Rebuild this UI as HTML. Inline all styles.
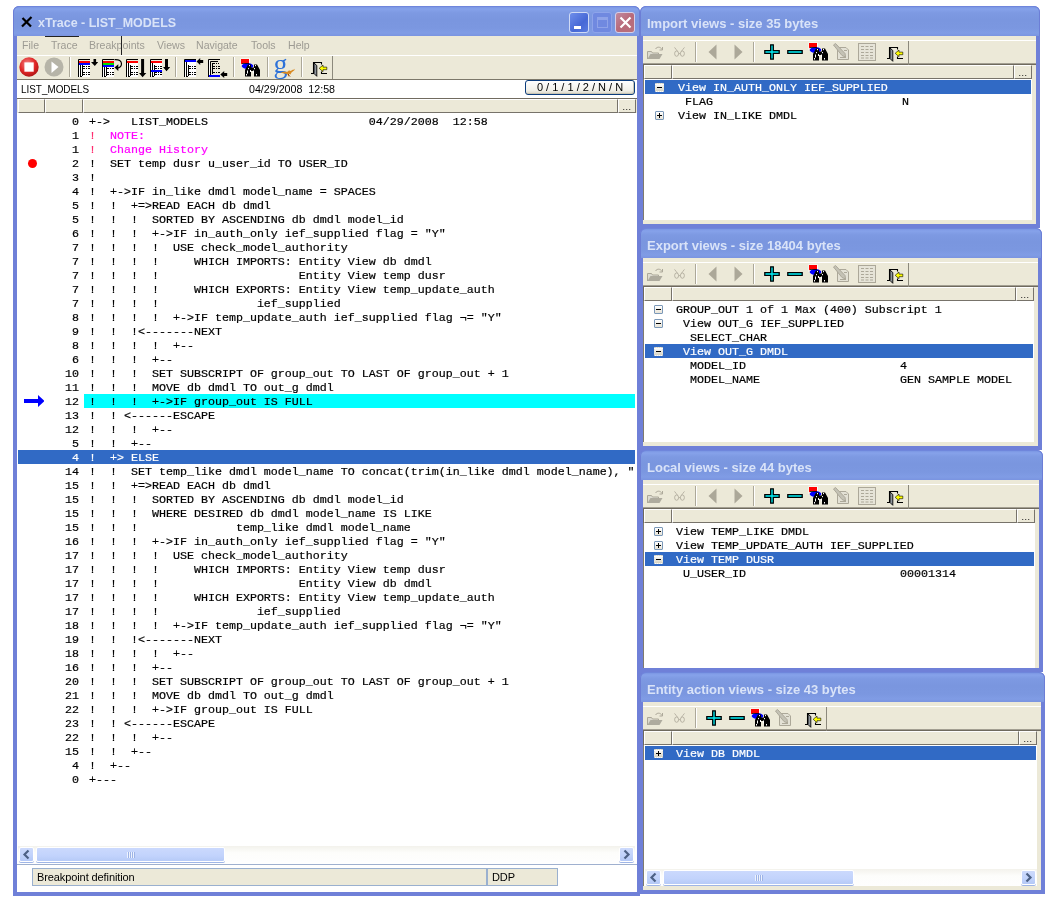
<!DOCTYPE html>
<html lang="en"><head><meta charset="utf-8"><title>xTrace - LIST_MODELS</title>
<style>
html,body{margin:0;padding:0;background:#fff;}
body{width:1052px;height:904px;position:relative;overflow:hidden;font-family:"Liberation Sans",sans-serif;font-size:11px;color:#000;}
*{box-sizing:border-box;}
.win{will-change:transform;position:absolute;background:#6f80d8;border-radius:6px 6px 0 0;overflow:hidden;}
.win.side{border-radius:6px 6px 0 0;}
.tbar{position:absolute;left:0;top:0;right:0;height:30px;background:linear-gradient(#7590e0 0,#86a2ea 3px,#7d99e2 7px,#7a96df 14px,#7b97e0 22px,#809ce5 27px,#7a94e0 30px);border-radius:6px 6px 0 0;box-shadow:inset 1px 0 0 #6c7ed6,inset -1px 0 0 #6c7ed6,inset 0 1px 0 #6f86dc;}
.appico{position:absolute;left:8px;top:10px;}
.ttl{position:absolute;top:9px;font-family:"Liberation Sans",sans-serif;font-weight:bold;font-size:13.5px;line-height:15px;color:#d9e3f8;white-space:pre;transform:scaleX(.925);transform-origin:0 50%;}
.ttl.s{font-size:13px;transform:none;top:10px;}
.cb{position:absolute;top:6px;width:20px;height:21px;border:1px solid #cfdaf5;border-radius:3px;}
.cb.min{background:linear-gradient(135deg,#6f8eea,#4668d6 60%,#5a7ce0);}
.cb.min i{position:absolute;left:4px;top:13px;width:7px;height:3px;background:#fff;}
.cb.max{background:#7089e0;border-color:#8ea4ea;}
.cb.max i{position:absolute;left:4px;top:4px;width:11px;height:11px;border:1px solid #8fa3e8;border-top-width:3px;}
.cb.cls{background:linear-gradient(135deg,#c08aa0,#b86a7a 50%,#b9707c);border-color:#d5cfe8;}
.cb.cls svg{position:absolute;left:-1px;top:-1px;}
.client{position:absolute;background:#ece9d8;overflow:hidden;}
#main .client{background:#fff;}
.menu{position:absolute;left:0;top:0;width:100%;height:19px;background:#ece9d8;}
.menu span{position:absolute;top:3px;font-size:11px;line-height:13px;color:#9d9b93;transform:scaleX(.96);transform-origin:0 50%;}
.menu .ml1{position:absolute;left:28px;top:0;width:34px;height:1px;background:#222;}
.menu .ml2{position:absolute;left:104px;top:0;width:1px;height:19px;background:#222;}
.tool{position:absolute;left:0;background:#ece9d8;border-top:1px solid #fff;border-bottom:1px solid #7c786a;}
.tbedge{position:absolute;top:0;bottom:0;border-right:1px solid #8c897c;}
.ic{position:absolute;overflow:visible;}
.sep{position:absolute;top:1px;width:2px;height:20px;border-left:1px solid #aca899;border-right:1px solid #fff;}
.info{position:absolute;left:0;top:44px;width:100%;height:19px;background:#fff;border-bottom:1px solid #716b60;}
.info span{position:absolute;top:3px;font-size:11px;line-height:13px;transform-origin:0 50%;}
.info .btn{position:absolute;left:508px;top:0;width:110px;height:15px;border:1px solid #0b3c7c;border-radius:3px;background:linear-gradient(#fff,#f2f1ea 70%,#d9d5c6);font-size:11px;line-height:13px;text-align:center;letter-spacing:0;word-spacing:0;box-shadow:inset -1px -1px 0 #c9c5b4;}
.hdr{position:absolute;left:0;height:14px;background:#ece9d8;z-index:2;}
.hdr i{position:absolute;top:0;height:14px;background:#ece9d8;border-left:1px solid #fff;border-top:1px solid #fff;border-right:1px solid #77736a;border-bottom:1px solid #77736a;font-style:normal;font-size:9px;line-height:9px;text-align:center;}
.hdr i.dots{padding-top:3px;letter-spacing:.5px;}
.code{-webkit-text-stroke:.2px currentColor;position:absolute;left:0;top:78px;width:620px;height:732px;background:#fff;font-family:"Liberation Mono",monospace;font-size:11.667px;line-height:14px;}
.row{position:absolute;left:0;width:620px;height:14px;white-space:pre;}
.row .n{position:absolute;left:27px;width:35px;text-align:right;top:1px;}
.row .t{position:absolute;left:72px;top:1px;}
.row.sel{background:#316ac5;color:#fff;left:1px;width:617px;}
.row.sel .n{left:26px}.row.sel .t{left:71px}
.row.mag{color:#ff00ff;}
.row.mag .n{color:#000;}
.row.mag em{font-style:normal;color:#ff2d6f;}
.cy{position:absolute;left:67px;top:0;width:551px;height:14px;background:#00ffff;}
.bp{position:absolute;left:11px;top:44.5px;width:9px;height:9px;border-radius:50%;background:#f00;}
.arr{position:absolute;left:7px;top:281px;}
.hs{position:absolute;height:17px;background:linear-gradient(#f3f2ec,#fdfdfb 40%,#fefefe);}
.sb{position:absolute;top:1px;width:15px;height:15px;border-radius:2px;background:linear-gradient(#cddafc,#c0d2fb 60%,#b4c8f6);border:1px solid #fff;box-shadow:0 1px 0 #9fb5e6;}
.sb svg{position:absolute;left:-1px;top:-1px;}
.sb.l{left:1px}.sb.r{right:1px}
.th{position:absolute;top:1px;height:15px;border-radius:2px;background:linear-gradient(#cbd9fd,#c2d3fc 60%,#b6caf7);border:1px solid #fff;box-shadow:0 1px 0 #9fb5e6;}
.th em{position:absolute;left:50%;top:4px;margin-left:-4px;width:8px;height:6px;background:repeating-linear-gradient(90deg,#eef3fe 0,#eef3fe 1px,#9db3e6 1px,#9db3e6 2px);}
.stline{position:absolute;left:0;top:828px;width:620px;height:1px;background:#9fb0cf;}
.st{position:absolute;top:832px;height:18px;background:#ece9d8;border:1px solid #9ab0cf;font-size:11px;line-height:16px;padding-left:4px;letter-spacing:-.1px;}
.side .client{background:#ece9d8;}
.tree{-webkit-text-stroke:.2px currentColor;position:absolute;left:0;background:#fff;border-left:1px solid #7f7b6e;font-family:"Liberation Mono",monospace;font-size:11.667px;line-height:14px;overflow:hidden;}
.side .hdr{left:0;border-left:1px solid #6f6a5e;}
.trow{position:absolute;left:1px;height:14px;white-space:pre;}
.trow.sel{background:#316ac5;color:#fff;}
.trow.sel .bx{border:1px dotted #e8e6dc;background:linear-gradient(#fff,#d6d2c2);}
.trow .t{position:absolute;top:1px;}
.trow .v{position:absolute;top:1px;}
.bx{position:absolute;left:10px;top:3px;width:9px;height:9px;border:1px solid #7b98b8;border-radius:1px;background:linear-gradient(#fff,#e8e4d8);}
.bx:before{content:"";position:absolute;left:1px;top:3px;width:5px;height:1px;background:#000;}
.bx.p:after{content:"";position:absolute;left:3px;top:1px;width:1px;height:5px;background:#000;}

.cp{position:absolute;left:640px;width:6px;height:6px;background:#6f80d8;}
.side .tool{border-bottom:0;box-shadow:inset 0 -1px 0 #6f6a5e,inset 0 -2px 0 #a39f92;}

</style></head>
<body>
<svg width="0" height="0" style="position:absolute"><defs>
<radialGradient id="g-red" cx=".42" cy=".35" r=".75"><stop offset="0" stop-color="#f48a8a"/><stop offset=".55" stop-color="#e02626"/><stop offset="1" stop-color="#9c1010"/></radialGradient>
<symbol id="i-stop" viewBox="0 0 22 22" overflow="visible"><circle cx="11" cy="11" r="9.700" fill="url(#g-red)"/><rect x="6.400" y="6.400" width="9.300" height="9.300" fill="#fff"/></symbol>
<symbol id="i-play" viewBox="0 0 22 22" overflow="visible"><circle cx="11" cy="11" r="9.500" fill="#b6b4a8"/><path d="M8.500 5.500L15.500 11L8.500 17Z" fill="#fff"/></symbol>
<symbol id="i-pg" viewBox="0 0 22 18" overflow="visible"><rect x="1" y="2" width="11" height="16" fill="#fff"/><path d="M0.500 18V0.500H12M2.500 17.500V2.500H12M2 17.500H4" stroke="#000" stroke-width="1" fill="none"/><path d="M4.500 6V17" stroke="#000" stroke-width="1"/><path d="M5 7.500H12M5 9.500H12M5 13.500H12M5 15.500H12" stroke="#000" stroke-width="1" stroke-dasharray="2 1 1 1 2" fill="none"/></symbol>
<symbol id="i-l1" viewBox="0 0 22 18" overflow="visible"><use href="#i-pg"/><rect x="1" y="2" width="11" height="2" fill="#f00"/><rect x="1" y="4" width="11" height="2" fill="#00f"/><path d="M15.500 0h2.600v3H20.200L16.800 7L13 3h2.500Z" fill="#000"/></symbol>
<symbol id="i-l2" viewBox="0 0 22 18" overflow="visible"><use href="#i-pg"/><rect x="1" y="2" width="11" height="2" fill="#f00"/><rect x="1" y="4" width="11" height="2" fill="#0d0"/><rect x="1" y="6" width="11" height="2" fill="#00f"/><path d="M12.500 0.600C17 0.200 19.600 2 19.500 5C19.400 8 17 9 15.500 8.800" stroke="#000" stroke-width="1.200" fill="none"/><path d="M16.300 5.300V12L12.500 8.500Z" fill="#000"/></symbol>
<symbol id="i-l3" viewBox="0 0 22 18" overflow="visible"><use href="#i-pg"/><rect x="1" y="2" width="11" height="2" fill="#f00"/><path d="M15.100 0h3v14h2.200L16.600 18.200L13 14h2.100Z" fill="#000"/></symbol>
<symbol id="i-l4" viewBox="0 0 22 18" overflow="visible"><use href="#i-pg"/><rect x="1" y="2" width="11" height="2" fill="#f00"/><rect x="1" y="11" width="11" height="2" fill="#00f"/><path d="M15 0h3v8h2.200L16.500 12.200L13 8h2Z" fill="#000"/></symbol>
<symbol id="i-l5" viewBox="0 0 22 18" overflow="visible"><use href="#i-pg"/><rect x="1" y="1" width="11" height="2" fill="#00f"/><path d="M19.200 1v3h-3v2L12.500 2.500L16.200 -1v2Z" fill="#000"/></symbol>
<symbol id="i-l6" viewBox="0 0 22 18" overflow="visible"><path d="M0.500 18V0.500H12M2.500 17.500V2.500H10" stroke="#000" stroke-width="1" fill="none"/><path d="M1.500 1V18" stroke="#fff"/><path d="M4.500 4V15" stroke="#000" stroke-width="1"/><path d="M5 4.500H11M5 7.500H12M5 9.500H12M5 13.500H12" stroke="#000" stroke-width="1" stroke-dasharray="2 1 1 1 2" fill="none"/><rect x="1" y="16" width="11" height="2" fill="#00f"/><path d="M19.200 14v3h-3v2L12.300 15.500L16.200 12v2Z" fill="#000"/></symbol>
<symbol id="i-bino" viewBox="0 0 20 18" overflow="visible"><path d="M-0.500 -0.500H9V5H2L-0.500 7Z" fill="#fff"/><path d="M0 0H8V4H2L0 5.500Z" fill="#f00"/><ellipse cx="6.500" cy="7" rx="5.800" ry="2.900" fill="#00f"/><path d="M1 4.500H8" stroke="#000" stroke-width=".8"/><path d="M4 17.500V11L7 5.500h3v3h3v-3h3L19 11v6.500h-6V12h-3v5.500Z" fill="#000"/><path d="M8.500 6v1.200M14.500 6v1.200M7.500 9v1.200M13.500 9v1.200M6.500 11.500v3M12.500 11.500v3M5.500 15v1.500M15.500 15v1.500M9.500 11v2" stroke="#fff" stroke-width="1"/></symbol>
<symbol id="i-goog" viewBox="0 0 22 21" overflow="visible"><text x="-0.500" y="14.500" font-family="Liberation Serif,serif" font-size="28" fill="#2d72d9">g</text><path d="M6.500 14.500c2.500-1.500 5-.5 7-.8c1.500-2 2.500-1 3.500-.8c1.200-1.800 3-.8 4-2.200c-.5 2.500-2.500 2.500-3.500 3.800c-1 1.800-1.500 3.500-3.500 4c.5-1.500-.5-2.500-2-2.800c-2 0-3.500-.5-5.500-1.200Z" fill="#d98a22"/><path d="M14 16l2 2.500" stroke="#7a3a10" stroke-width="1"/><path d="M14.500 15.500l2.300 1.500l-1 .8Z" fill="#fff"/></symbol>
<symbol id="i-exit" viewBox="0 0 17 16" overflow="visible"><path d="M2.500 12V1.500H10.500V3.500" stroke="#000" stroke-width="1.100" fill="none"/><path d="M3 2L5.800 4.500V15.300L3 12.500Z" fill="#8f959c" stroke="#000" stroke-width=".9"/><path d="M0 12.500H3" stroke="#000" stroke-width="1.100"/><path d="M10.500 10.500v2H16" stroke="#000" stroke-width="1.100" fill="none"/><path d="M8.200 7.300L12 4v2.100h3.800v2.600H12v2Z" fill="#ff0" stroke="#000" stroke-width=".6"/></symbol>
<symbol id="i-open" viewBox="0 0 17 14" overflow="visible"><path d="M0.500 13V5.500h4l1 1.500h6V8" fill="#dddbd0" stroke="#aca899" stroke-width="1"/><path d="M0.500 13L3.500 8h12L12.500 13Z" fill="#aeab9e"/><path d="M8.500 3c1.500-2.500 5-2.500 6.500.5" stroke="#aca899" stroke-width="1" fill="none"/><path d="M12.500 4h3V1" stroke="#aca899" stroke-width="1" fill="none"/></symbol>
<symbol id="i-glas" viewBox="0 0 13 14.500" overflow="visible"><ellipse cx="3" cy="8" rx="2.400" ry="3.200" fill="none" stroke="#aca899" stroke-width="1"/><ellipse cx="10" cy="8" rx="2.400" ry="3.200" fill="none" stroke="#aca899" stroke-width="1"/><path d="M0.500 0.500C2 2.500 3 3.500 4 5M12.500 .5C11 2.500 10 3.500 9 5M5.500 8h2" stroke="#aca899" stroke-width="1" fill="none"/></symbol>
<symbol id="i-left" viewBox="0 0 9 16" overflow="visible"><path d="M8.500 0.500V15.500L0.500 8Z" fill="#aca899"/></symbol>
<symbol id="i-right" viewBox="0 0 9 16" overflow="visible"><path d="M0.500 0.500V15.500L8.500 8Z" fill="#aca899"/></symbol>
<symbol id="i-plus" viewBox="0 0 16 16" overflow="visible"><path d="M6.700 0.800h2.600v5.900H15.200v2.600H9.300v5.900H6.700V9.300H0.800V6.700h5.900Z" fill="#00f0f8" stroke="#000" stroke-width="1.300"/></symbol>
<symbol id="i-minus" viewBox="0 0 16 6" overflow="visible"><path d="M0.800 1.700H15.200v2.600H0.800Z" fill="#00f0f8" stroke="#000" stroke-width="1.300"/></symbol>
<symbol id="i-edit" viewBox="0 0 17 17" overflow="visible"><path d="M4.500 4.500H13L15.500 7V16.500H4.500Z" fill="#e3e1d5" stroke="#aca899" stroke-width="1"/><path d="M0.500 2L2.500 0.500L12 10.500L12.500 14L9 12.500Z" fill="#c4c2b5" stroke="#aca899" stroke-width="1"/><path d="M7 14.500h6M11 7.500h3" stroke="#aca899"/></symbol>
<symbol id="i-tbl" viewBox="0 0 18 18" overflow="visible"><rect x="0.500" y="0.500" width="17" height="17" fill="#e6e4d8" stroke="#aca899" stroke-width="1"/><path d="M3 3.500h12M3 6.500h12M3 9.500h12M3 12.500h12M3 15h12" stroke="#aca899" stroke-width="1" stroke-dasharray="3 1.500"/></symbol>
</defs></svg>
<div class="win" id="main" style="left:13px;top:6px;width:627px;height:890px"><div class="tbar"><svg class="appico" width="12" height="12" viewBox="0 0 12 12"><path d="M1.500 2L10 10.500M10.500 1L1 10.500" stroke="#000" stroke-width="2.200" fill="none"/></svg><span class="ttl" style="left:25px">xTrace - LIST_MODELS</span><div class="cb min" style="left:556px"><i></i></div><div class="cb max" style="left:579px"><i></i></div><div class="cb cls" style="left:602px"><svg width="21" height="21" viewBox="0 0 21 21"><path d="M5.5 5.5 L15.5 15.5 M15.5 5.5 L5.5 15.5" stroke="#fff" stroke-width="2.2" fill="none"/></svg></div></div><div class="client" style="left:4px;top:30px;width:620px;height:856px"><div class="menu"><span style="left:5px">File</span><span style="left:34px">Trace</span><span style="left:72px">Breakpoints</span><span style="left:140px">Views</span><span style="left:179px">Navigate</span><span style="left:234px">Tools</span><span style="left:271px">Help</span><b class="ml1"></b><b class="ml2"></b></div><div class="tool" style="top:19px;width:620px;height:25px"><div class="tbedge" style="left:0;width:316px"></div><svg class="ic" style="left:1.4px;top:0.4px" width="22" height="22"><use href="#i-stop"/></svg><svg class="ic" style="left:25.5px;top:0.4px" width="22" height="22"><use href="#i-play"/></svg><b class="sep" style="left:52px"></b><svg class="ic" style="left:61px;top:3px" width="22" height="18"><use href="#i-l1"/></svg><svg class="ic" style="left:85px;top:3px" width="22" height="18"><use href="#i-l2"/></svg><svg class="ic" style="left:109px;top:3px" width="22" height="18"><use href="#i-l3"/></svg><svg class="ic" style="left:133px;top:3px" width="22" height="18"><use href="#i-l4"/></svg><b class="sep" style="left:158px"></b><svg class="ic" style="left:167px;top:3px" width="22" height="18"><use href="#i-l5"/></svg><svg class="ic" style="left:191px;top:3px" width="22" height="18"><use href="#i-l6"/></svg><b class="sep" style="left:216px"></b><svg class="ic" style="left:224px;top:3px" width="20" height="18"><use href="#i-bino"/></svg><b class="sep" style="left:250px"></b><svg class="ic" style="left:257px;top:1.5px" width="22" height="21"><use href="#i-goog"/></svg><b class="sep" style="left:284px"></b><svg class="ic" style="left:294px;top:5px" width="17" height="16"><use href="#i-exit"/></svg></div><div class="info"><span style="left:4px;transform:scaleX(.9)">LIST_MODELS</span><span style="left:232px;white-space:pre;transform:scaleX(.97)">04/29/2008  12:58</span><div class="btn">0 / 1 / 1 / 2 / N / N</div></div><div class="hdr" style="top:63px;width:620px"><i style="left:1px;width:27px"></i><i style="left:28px;width:38px"></i><i style="left:66px;width:535px"></i><i class="dots" style="left:601px;width:18px">...</i></div><div class="code"><div class="row" style="top:0px"><span class="n">0</span><span class="t">+-&gt;   LIST_MODELS                       04/29/2008  12:58</span></div><div class="row mag" style="top:14px"><span class="n">1</span><span class="t"><em>!</em>  NOTE:</span></div><div class="row mag" style="top:28px"><span class="n">1</span><span class="t"><em>!</em>  Change History</span></div><div class="row" style="top:42px"><span class="n">2</span><span class="t">!  SET temp dusr u_user_id TO USER_ID</span></div><div class="row" style="top:56px"><span class="n">3</span><span class="t">!</span></div><div class="row" style="top:70px"><span class="n">4</span><span class="t">!  +-&gt;IF in_like dmdl model_name = SPACES</span></div><div class="row" style="top:84px"><span class="n">5</span><span class="t">!  !  +=&gt;READ EACH db dmdl</span></div><div class="row" style="top:98px"><span class="n">5</span><span class="t">!  !  !  SORTED BY ASCENDING db dmdl model_id</span></div><div class="row" style="top:112px"><span class="n">6</span><span class="t">!  !  !  +-&gt;IF in_auth_only ief_supplied flag = "Y"</span></div><div class="row" style="top:126px"><span class="n">7</span><span class="t">!  !  !  !  USE check_model_authority</span></div><div class="row" style="top:140px"><span class="n">7</span><span class="t">!  !  !  !     WHICH IMPORTS: Entity View db dmdl</span></div><div class="row" style="top:154px"><span class="n">7</span><span class="t">!  !  !  !                    Entity View temp dusr</span></div><div class="row" style="top:168px"><span class="n">7</span><span class="t">!  !  !  !     WHICH EXPORTS: Entity View temp_update_auth</span></div><div class="row" style="top:182px"><span class="n">7</span><span class="t">!  !  !  !              ief_supplied</span></div><div class="row" style="top:196px"><span class="n">8</span><span class="t">!  !  !  !  +-&gt;IF temp_update_auth ief_supplied flag ¬= "Y"</span></div><div class="row" style="top:210px"><span class="n">9</span><span class="t">!  !  !&lt;-------NEXT</span></div><div class="row" style="top:224px"><span class="n">8</span><span class="t">!  !  !  !  +--</span></div><div class="row" style="top:238px"><span class="n">6</span><span class="t">!  !  !  +--</span></div><div class="row" style="top:252px"><span class="n">10</span><span class="t">!  !  !  SET SUBSCRIPT OF group_out TO LAST OF group_out + 1</span></div><div class="row" style="top:266px"><span class="n">11</span><span class="t">!  !  !  MOVE db dmdl TO out_g dmdl</span></div><div class="row" style="top:280px"><b class="cy"></b><span class="n">12</span><span class="t">!  !  !  +-&gt;IF group_out IS FULL</span></div><div class="row" style="top:294px"><span class="n">13</span><span class="t">!  ! &lt;------ESCAPE</span></div><div class="row" style="top:308px"><span class="n">12</span><span class="t">!  !  !  +--</span></div><div class="row" style="top:322px"><span class="n">5</span><span class="t">!  !  +--</span></div><div class="row sel" style="top:336px"><span class="n">4</span><span class="t">!  +&gt; ELSE</span></div><div class="row" style="top:350px"><span class="n">14</span><span class="t">!  !  SET temp_like dmdl model_name TO concat(trim(in_like dmdl model_name), "</span></div><div class="row" style="top:364px"><span class="n">15</span><span class="t">!  !  +=&gt;READ EACH db dmdl</span></div><div class="row" style="top:378px"><span class="n">15</span><span class="t">!  !  !  SORTED BY ASCENDING db dmdl model_id</span></div><div class="row" style="top:392px"><span class="n">15</span><span class="t">!  !  !  WHERE DESIRED db dmdl model_name IS LIKE</span></div><div class="row" style="top:406px"><span class="n">15</span><span class="t">!  !  !              temp_like dmdl model_name</span></div><div class="row" style="top:420px"><span class="n">16</span><span class="t">!  !  !  +-&gt;IF in_auth_only ief_supplied flag = "Y"</span></div><div class="row" style="top:434px"><span class="n">17</span><span class="t">!  !  !  !  USE check_model_authority</span></div><div class="row" style="top:448px"><span class="n">17</span><span class="t">!  !  !  !     WHICH IMPORTS: Entity View temp dusr</span></div><div class="row" style="top:462px"><span class="n">17</span><span class="t">!  !  !  !                    Entity View db dmdl</span></div><div class="row" style="top:476px"><span class="n">17</span><span class="t">!  !  !  !     WHICH EXPORTS: Entity View temp_update_auth</span></div><div class="row" style="top:490px"><span class="n">17</span><span class="t">!  !  !  !              ief_supplied</span></div><div class="row" style="top:504px"><span class="n">18</span><span class="t">!  !  !  !  +-&gt;IF temp_update_auth ief_supplied flag ¬= "Y"</span></div><div class="row" style="top:518px"><span class="n">19</span><span class="t">!  !  !&lt;-------NEXT</span></div><div class="row" style="top:532px"><span class="n">18</span><span class="t">!  !  !  !  +--</span></div><div class="row" style="top:546px"><span class="n">16</span><span class="t">!  !  !  +--</span></div><div class="row" style="top:560px"><span class="n">20</span><span class="t">!  !  !  SET SUBSCRIPT OF group_out TO LAST OF group_out + 1</span></div><div class="row" style="top:574px"><span class="n">21</span><span class="t">!  !  !  MOVE db dmdl TO out_g dmdl</span></div><div class="row" style="top:588px"><span class="n">22</span><span class="t">!  !  !  +-&gt;IF group_out IS FULL</span></div><div class="row" style="top:602px"><span class="n">23</span><span class="t">!  ! &lt;------ESCAPE</span></div><div class="row" style="top:616px"><span class="n">22</span><span class="t">!  !  !  +--</span></div><div class="row" style="top:630px"><span class="n">15</span><span class="t">!  !  +--</span></div><div class="row" style="top:644px"><span class="n">4</span><span class="t">!  +--</span></div><div class="row" style="top:658px"><span class="n">0</span><span class="t">+---</span></div><b class="bp"></b><svg class="arr" width="20" height="12" viewBox="0 0 20 12"><path d="M0 4H14V0L20.5 6L14 12V8H0Z" fill="#0000ff"/></svg></div><div class="hs" style="left:1px;top:810px;width:617px"><div class="sb l"><svg width="15" height="15" viewBox="0 0 15 15"><path d="M9.5 3.5L5.5 7.5L9.5 11.5" stroke="#4d6185" stroke-width="2.2" fill="none"/></svg></div><div class="th" style="left:18px;width:189px"><em></em></div><div class="sb r"><svg width="15" height="15" viewBox="0 0 15 15"><path d="M5.5 3.5L9.5 7.5L5.5 11.5" stroke="#4d6185" stroke-width="2.2" fill="none"/></svg></div></div><div class="stline"></div><div class="st" style="left:15px;width:455px">Breakpoint definition</div><div class="st" style="left:470px;width:71px">DDP</div></div></div>
<b class="cp" style="top:228px"></b><b class="cp" style="top:450px"></b><b class="cp" style="top:672px"></b><div class="win side" style="left:640px;top:6px;width:400px;height:222px;z-index:1"><div class="tbar"><span class="ttl s" style="left:7px">Import views - size 35 bytes</span></div><div class="client" style="left:3px;top:30px;width:393px;height:188px"><div class="tool" style="top:4px;width:393px;height:25px"><div class="tbedge" style="left:0;width:266px"></div><svg class="ic" style="left:4px;top:5px" width="17" height="14"><use href="#i-open"/></svg><svg class="ic" style="left:29.6px;top:6px" width="13" height="12"><use href="#i-glas"/></svg><b class="sep" style="left:52px"></b><svg class="ic" style="left:64.5px;top:3px" width="9" height="16"><use href="#i-left"/></svg><svg class="ic" style="left:90.5px;top:3px" width="9" height="16"><use href="#i-right"/></svg><b class="sep" style="left:110px"></b><svg class="ic" style="left:121px;top:3px" width="16" height="16"><use href="#i-plus"/></svg><svg class="ic" style="left:144px;top:8px" width="16" height="6"><use href="#i-minus"/></svg><svg class="ic" style="left:166px;top:2px" width="20" height="18"><use href="#i-bino"/></svg><svg class="ic" style="left:190px;top:2px" width="17" height="17"><use href="#i-edit"/></svg><svg class="ic" style="left:215px;top:2px" width="18" height="18"><use href="#i-tbl"/></svg><svg class="ic" style="left:244px;top:4.7px" width="17" height="16"><use href="#i-exit"/></svg></div><div class="hdr" style="top:29px;width:389px"><i style="left:0px;width:28px"></i><i style="left:28px;width:342px"></i><i class="dots" style="left:370px;width:18px">...</i></div><div class="tree" style="top:42px;width:389px;height:142px"><div class="trow sel" style="top:2px;width:386px"><b class="bx m" style="left:10px"></b><span class="t" style="left:33px">View IN_AUTH_ONLY IEF_SUPPLIED</span></div><div class="trow" style="top:16px;width:386px"><span class="t" style="left:40px">FLAG</span><span class="v" style="left:257px">N</span></div><div class="trow" style="top:30px;width:386px"><b class="bx p" style="left:10px"></b><span class="t" style="left:33px">View IN_LIKE DMDL</span></div></div></div></div>
<div class="win side" style="left:640px;top:228px;width:402px;height:222px;z-index:2"><div class="tbar"><span class="ttl s" style="left:7px">Export views - size 18404 bytes</span></div><div class="client" style="left:3px;top:30px;width:395px;height:188px"><div class="tool" style="top:4px;width:395px;height:25px"><div class="tbedge" style="left:0;width:266px"></div><svg class="ic" style="left:4px;top:5px" width="17" height="14"><use href="#i-open"/></svg><svg class="ic" style="left:29.6px;top:6px" width="13" height="12"><use href="#i-glas"/></svg><b class="sep" style="left:52px"></b><svg class="ic" style="left:64.5px;top:3px" width="9" height="16"><use href="#i-left"/></svg><svg class="ic" style="left:90.5px;top:3px" width="9" height="16"><use href="#i-right"/></svg><b class="sep" style="left:110px"></b><svg class="ic" style="left:121px;top:3px" width="16" height="16"><use href="#i-plus"/></svg><svg class="ic" style="left:144px;top:8px" width="16" height="6"><use href="#i-minus"/></svg><svg class="ic" style="left:166px;top:2px" width="20" height="18"><use href="#i-bino"/></svg><svg class="ic" style="left:190px;top:2px" width="17" height="17"><use href="#i-edit"/></svg><svg class="ic" style="left:215px;top:2px" width="18" height="18"><use href="#i-tbl"/></svg><svg class="ic" style="left:244px;top:4.7px" width="17" height="16"><use href="#i-exit"/></svg></div><div class="hdr" style="top:29px;width:391px"><i style="left:0px;width:28px"></i><i style="left:28px;width:344px"></i><i class="dots" style="left:372px;width:18px">...</i></div><div class="tree" style="top:42px;width:391px;height:142px"><div class="trow" style="top:2px;width:388px"><b class="bx m" style="left:9px"></b><span class="t" style="left:31px">GROUP_OUT 1 of 1 Max (400) Subscript 1</span></div><div class="trow" style="top:16px;width:388px"><b class="bx m" style="left:9px"></b><span class="t" style="left:38px">View OUT_G IEF_SUPPLIED</span></div><div class="trow" style="top:30px;width:388px"><span class="t" style="left:45px">SELECT_CHAR</span></div><div class="trow sel" style="top:44px;width:388px"><b class="bx m" style="left:9px"></b><span class="t" style="left:38px">View OUT_G DMDL</span></div><div class="trow" style="top:58px;width:388px"><span class="t" style="left:45px">MODEL_ID</span><span class="v" style="left:255px">4</span></div><div class="trow" style="top:72px;width:388px"><span class="t" style="left:45px">MODEL_NAME</span><span class="v" style="left:255px">GEN SAMPLE MODEL</span></div></div></div></div>
<div class="win side" style="left:640px;top:450px;width:403px;height:222px;z-index:3"><div class="tbar"><span class="ttl s" style="left:7px">Local views - size 44 bytes</span></div><div class="client" style="left:3px;top:30px;width:396px;height:188px"><div class="tool" style="top:4px;width:396px;height:25px"><div class="tbedge" style="left:0;width:266px"></div><svg class="ic" style="left:4px;top:5px" width="17" height="14"><use href="#i-open"/></svg><svg class="ic" style="left:29.6px;top:6px" width="13" height="12"><use href="#i-glas"/></svg><b class="sep" style="left:52px"></b><svg class="ic" style="left:64.5px;top:3px" width="9" height="16"><use href="#i-left"/></svg><svg class="ic" style="left:90.5px;top:3px" width="9" height="16"><use href="#i-right"/></svg><b class="sep" style="left:110px"></b><svg class="ic" style="left:121px;top:3px" width="16" height="16"><use href="#i-plus"/></svg><svg class="ic" style="left:144px;top:8px" width="16" height="6"><use href="#i-minus"/></svg><svg class="ic" style="left:166px;top:2px" width="20" height="18"><use href="#i-bino"/></svg><svg class="ic" style="left:190px;top:2px" width="17" height="17"><use href="#i-edit"/></svg><svg class="ic" style="left:215px;top:2px" width="18" height="18"><use href="#i-tbl"/></svg><svg class="ic" style="left:244px;top:4.7px" width="17" height="16"><use href="#i-exit"/></svg></div><div class="hdr" style="top:29px;width:392px"><i style="left:0px;width:28px"></i><i style="left:28px;width:345px"></i><i class="dots" style="left:373px;width:18px">...</i></div><div class="tree" style="top:42px;width:392px;height:146px"><div class="trow" style="top:2px;width:389px"><b class="bx p" style="left:9px"></b><span class="t" style="left:31px">View TEMP_LIKE DMDL</span></div><div class="trow" style="top:16px;width:389px"><b class="bx p" style="left:9px"></b><span class="t" style="left:31px">View TEMP_UPDATE_AUTH IEF_SUPPLIED</span></div><div class="trow sel" style="top:30px;width:389px"><b class="bx m" style="left:9px"></b><span class="t" style="left:31px">View TEMP DUSR</span></div><div class="trow" style="top:44px;width:389px"><span class="t" style="left:38px">U_USER_ID</span><span class="v" style="left:255px">00001314</span></div></div></div></div>
<div class="win side" style="left:640px;top:672px;width:405px;height:222px;z-index:4"><div class="tbar"><span class="ttl s" style="left:7px">Entity action views - size 43 bytes</span></div><div class="client" style="left:3px;top:30px;width:398px;height:188px"><div class="tool" style="top:4px;width:398px;height:25px"><div class="tbedge" style="left:0;width:184px"></div><svg class="ic" style="left:4px;top:5px" width="17" height="14"><use href="#i-open"/></svg><svg class="ic" style="left:29.6px;top:6px" width="13" height="12"><use href="#i-glas"/></svg><b class="sep" style="left:52px"></b><svg class="ic" style="left:63px;top:3px" width="16" height="16"><use href="#i-plus"/></svg><svg class="ic" style="left:86px;top:8px" width="16" height="6"><use href="#i-minus"/></svg><svg class="ic" style="left:108px;top:2px" width="20" height="18"><use href="#i-bino"/></svg><svg class="ic" style="left:132px;top:2px" width="17" height="17"><use href="#i-edit"/></svg><svg class="ic" style="left:162px;top:4.7px" width="17" height="16"><use href="#i-exit"/></svg></div><div class="hdr" style="top:29px;width:394px"><i style="left:0px;width:28px"></i><i style="left:28px;width:347px"></i><i class="dots" style="left:375px;width:18px">...</i></div><div class="tree" style="top:42px;width:394px;height:142px"><div class="trow sel" style="top:2px;width:391px"><b class="bx p" style="left:9px"></b><span class="t" style="left:31px">View DB DMDL</span></div><div class="hs" style="left:1px;top:125px;width:392px"><div class="sb l"><svg width="15" height="15" viewBox="0 0 15 15"><path d="M9.500 3.500L5.500 7.500L9.500 11.500" stroke="#4d6185" stroke-width="2.200" fill="none"/></svg></div><div class="th" style="left:18px;width:191px"><em></em></div><div class="sb r"><svg width="15" height="15" viewBox="0 0 15 15"><path d="M5.500 3.500L9.500 7.500L5.500 11.500" stroke="#4d6185" stroke-width="2.200" fill="none"/></svg></div></div></div></div></div>
</body></html>
